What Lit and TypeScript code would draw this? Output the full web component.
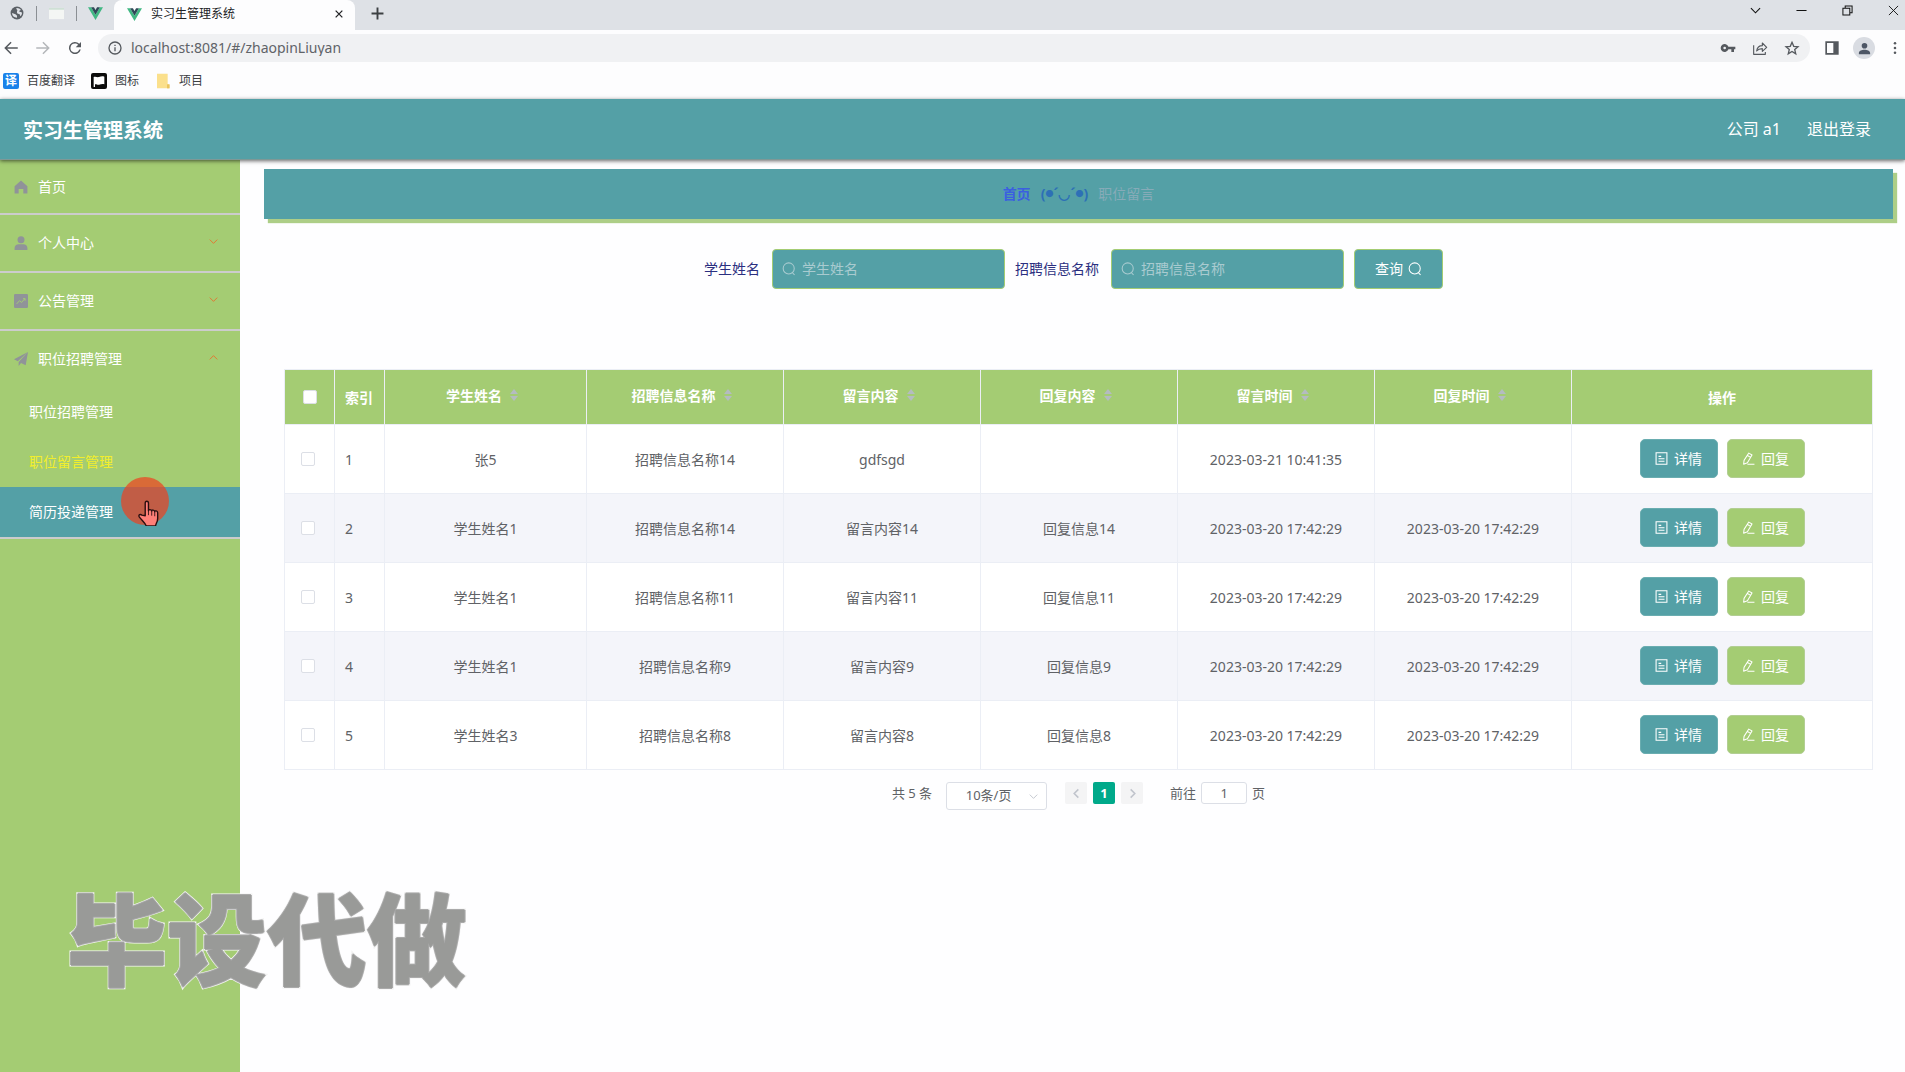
import { LitElement, html, css, svg, nothing } from "lit";
import { customElement, property } from "lit/decorators.js";
import { classMap } from "lit/directives/class-map.js";

const FONT = css`"Noto Sans", "Noto Sans CJK SC", sans-serif`;

const base = css`
  * { box-sizing: border-box; }
  svg { display: block; flex: none; }
  button, input, select { font: inherit; margin: 0; }
  button { cursor: pointer; padding: 0; border: 0; background: none; color: inherit; }
  a { color: inherit; text-decoration: none; }
`;

const shapes: Record<string, unknown> = {
  back: svg`<path fill="currentColor" d="M21 11H6.8l6-6L11.400 3.600 3 12l8.400 8.400 1.400-1.400-6-6H21z"/>`,
  forward: svg`<path fill="currentColor" d="M3 11h14.200l-6-6 1.400-1.400L21 12l-8.400 8.400-1.400-1.400 6-6H3z"/>`,
  reload: svg`<path fill="currentColor" d="M17.650 6.350A8 8 0 1 0 19.730 14h-2.080A6 6 0 1 1 12 6c1.660 0 3.140.69 4.220 1.780L13 11h7V4z"/>`,
  info: svg`<path fill="currentColor" d="M11 7h2v2h-2zm0 4h2v6h-2zm1-9a10 10 0 1 0 0 20 10 10 0 0 0 0-20zm0 18a8 8 0 1 1 0-16 8 8 0 0 1 0 16z"/>`,
  key: svg`<path fill="currentColor" d="M12.650 10A6 6 0 1 0 12.650 14H17v4h4v-4h2v-4zM7 14a2 2 0 1 1 0-4 2 2 0 0 1 0 4z"/>`,
  share: svg`<path fill="none" stroke="currentColor" stroke-width="1.700" stroke-linejoin="round" d="M2.500 8v13.500H20V18M7 16.500c.8-5.500 4-8 8.500-8V4.500L22 11l-6.500 6v-4c-4 0-6.500 1-8.500 3.500z"/>`,
  star: svg`<path fill="none" stroke="currentColor" stroke-width="2" d="M12 3.500l2.600 6 6.400.6-4.900 4.200 1.500 6.300-5.600-3.400-5.600 3.400 1.500-6.300L3 10.100l6.400-.6z"/>`,
  panel: svg`<path fill="currentColor" fill-rule="evenodd" d="M2 2h20v20H2zM4.500 4.500v15H14v-15z"/>`,
  person: svg`<path fill="currentColor" d="M12 12a4.500 4.500 0 1 0 0-9 4.500 4.500 0 0 0 0 9zm0 2c-4 0-9 1.600-9 5v2h18v-2c0-3.400-5-5-9-5z"/>`,
  dots: svg`<g fill="currentColor"><circle cx="12" cy="4" r="2.200"/><circle cx="12" cy="12" r="2.200"/><circle cx="12" cy="20" r="2.200"/></g>`,
  globe: svg`<circle cx="12" cy="12" r="11" fill="#5b6066"/><path fill="#dfe2e7" d="M3.500 12c2 .3 3 1.200 4.500 1.500 2 .4 2.200 1.500 3.500 2.500 1 .8.500 2.500.500 4C7 20 3.500 17 3.500 12zM11 3.500c3-.3 6 .8 8 3.500-2.500.2-3 1.500-3 3 1.500.5 3 .3 4.500 1 .2 3-1 5-2.500 6.500-1-1-.5-2.500-1.500-3.500-1.500-1-4-.5-4.500-2.500-.5-2.500 1-3 .5-4.500-.5-1-2-1.500-1.500-3.500z"/>`,
  vue: svg`<path fill="#41b883" d="M0 2h5l7 12 7-12h5L12 22.500z"/><path fill="#2f4858" d="M5 2h4.500L12 6.500 14.500 2H19l-7 12z"/>`,
  page: svg`<path fill="#f4f6f4" d="M0 3h24v18H0z"/><path fill="#cfe0d6" d="M0 3h24v3H0z"/>`,
  cross: svg`<path stroke="currentColor" stroke-width="3" d="M4 4l16 16M20 4L4 20"/>`,
  thinCross: svg`<path stroke="currentColor" stroke-width="2" d="M2 2l20 20M22 2L2 22"/>`,
  plus: svg`<path stroke="currentColor" stroke-width="3.500" d="M12 1v22M1 12h22"/>`,
  down: svg`<path fill="none" stroke="currentColor" stroke-width="2.400" d="M2 7l10 10L22 7"/>`,
  up: svg`<path fill="none" stroke="currentColor" stroke-width="2.400" d="M2 17L12 7l10 10"/>`,
  left: svg`<path fill="none" stroke="currentColor" stroke-width="3.400" d="M16 3l-9 9 9 9"/>`,
  right: svg`<path fill="none" stroke="currentColor" stroke-width="3.400" d="M8 3l9 9-9 9"/>`,
  minimize: svg`<path stroke="currentColor" stroke-width="2.200" d="M1 12h22"/>`,
  restore: svg`<path fill="none" stroke="currentColor" stroke-width="2.200" d="M2 7h15v15H2zM7 7V2h15v15h-5"/>`,
  search: svg`<circle cx="11.500" cy="11" r="9.500" fill="none" stroke="currentColor" stroke-width="1.800"/><path stroke="currentColor" stroke-width="1.800" d="M17.500 18l4 4"/>`,
  home: svg`<path fill="currentColor" d="M12 1L1 10.500V23h7v-7.500h8V23h7V10.500z"/>`,
  user: svg`<circle cx="12" cy="6.500" r="6" fill="currentColor"/><path fill="currentColor" d="M1 24v-3.500C1 16.500 4 14 8 14h8c4 0 7 2.500 7 6.500V24z"/>`,
  chart: svg`<rect width="24" height="24" rx="2" fill="currentColor"/><path fill="none" stroke="#a4cc73" stroke-width="1.600" d="M4.500 17l5-5.500 3.500 3 5.500-6.500M15.500 8h3.500v3.500"/>`,
  plane: svg`<path fill="currentColor" d="M24 0L0 12.500l6.500 3.500zM24 0L8 17v7l4-5 8 3.500z"/>`,
  document: svg`<path fill="none" stroke="currentColor" stroke-width="2" d="M2 1.500h20v21H2zM6.500 8h5M6.500 12.500h11M6.500 17h11"/>`,
  edit: svg`<path fill="none" stroke="currentColor" stroke-width="1.900" stroke-linejoin="round" d="M12.500 2l6 3.500-8.500 14.500-7 2.500.8-7zM10 6.500l6 3.500M10 22.500h13"/>`,
  flag: svg`<rect width="24" height="24" rx="3" fill="#0c0c0c"/><path fill="#fff" d="M4 6c3-1.500 5 1 8 0s5-2 8-.5V17c-3-1-5 0-8 .5S8 16 6 17v4H4z"/>`,
  folder: svg`<path fill="#fbe08c" d="M3 1h16v16h2v6H3z"/><path fill="#eac45c" d="M18 17h4v6h-4z"/>`,
  hand: svg`<path fill="#ff7f78" stroke="#2a0f10" stroke-width="1.300" stroke-linejoin="round" d="M8.500 14.500V3c0-2.400 3-2.400 3 0v7c0-1.500 2.800-1.500 3 .3 0-1.500 2.600-1.300 2.800.5.200-1.300 2.700-1 2.700 1V17c0 3-1.500 4.500-2 7H9.500C8.500 21 5 18.500 3 15.500c-1-1.800 1-2.800 2.500-1.500z"/><path stroke="#2a0f10" stroke-width=".8" d="M11.500 10v4M14.500 10.500v4M17.300 11v4"/>`,
};

const icon = (name: string, size: number) => html`
  <svg viewBox="0 0 24 24" width=${size} height=${size} aria-hidden="true">${shapes[name]}</svg>`;

@customElement("browser-bar")
export class BrowserBar extends LitElement {
  static styles = [base, css`
    :host { display: block; font: 12px/16px ${FONT}; color: #3c4043; background: #fdfdfe; }
    .tabs { display: flex; height: 30px; padding-bottom: 4px; align-items: center; background: #dee1e6; }
    .mini { display: flex; justify-content: center; width: 40px; }
    .mini + .mini { border-left: 1px solid #8b8f94; }
    .mini:first-child { width: 36px; padding-right: 2px; }
    .mini.edge { width: 38px; }
    .tab { display: flex; align-items: center; align-self: flex-start; width: 241px; height: 30px; padding: 0 11px 2px 13px; gap: 9px; border-radius: 8px 8px 0 0; background: #fdfdfe; color: #202124; }
    .name { flex: 1; }
    .add { margin-left: 16px; }
    .window { display: flex; gap: 35px; margin-left: auto; padding-right: 6px; padding-bottom: 6px; color: #111; }
    .tools { display: flex; align-items: center; height: 36px; color: #55595e; }
    .nav { display: flex; gap: 14px; padding: 0 14px 0 2px; }
    .nav .off { color: #b4b7ba; }
    .address { display: flex; align-items: center; flex: 1; height: 28px; padding: 0 10px 0 9px; gap: 8px; border-radius: 14px; background: #f0f1f3; }
    .url { flex: 1; min-width: 0; border: 0; outline: 0; padding: 0; background: none; font-size: 14px; color: #5f6368; }
    .marks { display: flex; gap: 16px; }
    .side { display: flex; align-items: center; gap: 13px; padding: 0 3px 0 14px; }
    .avatar { display: grid; place-items: center; width: 22px; height: 22px; border-radius: 50%; background: #d9dce2; color: #4d5665; }
    .bookmarks { display: flex; align-items: center; gap: 16px; height: 32px; padding: 0 3px 3px; }
    .bookmark { display: flex; align-items: center; gap: 8px; }
    .fanyi { display: grid; place-items: center; width: 16px; height: 16px; border-radius: 2px; background: #1a82ea; color: #fff; font-weight: 700; }
  `];

  render() {
    return html`
      <div class="tabs">
        <div class="mini">${icon("globe", 14)}</div>
        <div class="mini">${icon("page", 15)}</div>
        <div class="mini edge">${icon("vue", 15)}</div>
        <div class="tab">
          ${icon("vue", 15)}<span class="name">实习生管理系统</span>
          <button aria-label="关闭标签页">${icon("cross", 10)}</button>
        </div>
        <button class="add" aria-label="新建标签页">${icon("plus", 13)}</button>
        <div class="window">
          <button aria-label="搜索标签页">${icon("down", 11)}</button>
          <button aria-label="最小化">${icon("minimize", 11)}</button>
          <button aria-label="还原">${icon("restore", 11)}</button>
          <button aria-label="关闭">${icon("thinCross", 11)}</button>
        </div>
      </div>
      <div class="tools">
        <div class="nav">
          <button aria-label="后退">${icon("back", 18)}</button>
          <button class="off" aria-label="前进" disabled>${icon("forward", 18)}</button>
          <button aria-label="重新加载">${icon("reload", 18)}</button>
        </div>
        <div class="address">
          ${icon("info", 16)}
          <input class="url" aria-label="地址栏" value="localhost:8081/#/zhaopinLiuyan" />
          <div class="marks">
            <button aria-label="密码">${icon("key", 16)}</button>
            <button aria-label="分享">${icon("share", 16)}</button>
            <button aria-label="收藏">${icon("star", 16)}</button>
          </div>
        </div>
        <div class="side">
          <button aria-label="侧边栏">${icon("panel", 16)}</button>
          <button class="avatar" aria-label="用户">${icon("person", 15)}</button>
          <button aria-label="菜单">${icon("dots", 14)}</button>
        </div>
      </div>
      <div class="bookmarks">
        <a class="bookmark" href="#fanyi"><span class="fanyi">译</span>百度翻译</a>
        <a class="bookmark" href="#icons">${icon("flag", 16)}图标</a>
        <a class="bookmark" href="#projects">${icon("folder", 16)}项目</a>
      </div>`;
  }
}

interface Section { label: string; icon: string; arrow?: "up" | "down"; children?: string[]; }

@customElement("side-menu")
export class SideMenu extends LitElement {
  static styles = [base, css`
    :host { display: block; width: 240px; flex: none; background: #a4cc73; color: #fff; font: 14px/20px ${FONT}; }
    .section { border-bottom: 2px solid #ccc; }
    .title { display: flex; align-items: center; gap: 10px; width: 100%; height: 56px; padding: 0 22px 0 14px; text-align: left; color: #fff; }
    .section:first-child .title { height: 53px; }
    .glyph { color: #909399; }
    .label { flex: 1; }
    .arrow { color: #e8702e; padding-bottom: 4px; }
    .item { display: flex; align-items: center; height: 50px; padding-left: 29px; }
    .item.current { color: #f2ee2c; }
    .item.hover { background: #54a0a6; }
  `];

  sections: Section[] = [
    { label: "首页", icon: "home" },
    { label: "个人中心", icon: "user", arrow: "down" },
    { label: "公告管理", icon: "chart", arrow: "down" },
    { label: "职位招聘管理", icon: "plane", arrow: "up", children: ["职位招聘管理", "职位留言管理", "简历投递管理"] },
  ];

  render() {
    return html`<nav>${this.sections.map((s) => html`
      <div class="section">
        <button class="title">
          <span class="glyph">${icon(s.icon, 14)}</span>
          <span class="label">${s.label}</span>
          ${s.arrow ? html`<span class="arrow">${icon(s.arrow, 9)}</span>` : nothing}
        </button>
        ${s.children?.map((c, i) => html`
          <a href="#/" class=${classMap({ item: true, current: i === 1, hover: i === 2 })}>${c}</a>`)}
      </div>`)}</nav>`;
  }
}

@customElement("message-table")
export class MessageTable extends LitElement {
  static styles = [base, css`
    :host { display: block; font: 14px/23px ${FONT}; color: #606266; }
    table { width: 100%; table-layout: fixed; border-collapse: collapse; }
    th, td { border: 1px solid #ebeef5; padding: 0 10px; text-align: center; }
    th { height: 55px; background: #a4cc73; color: #fff; font-weight: 700; }
    td { height: 69px; background: #fff; }
    tr:nth-child(even) td { background: #f4f5fa; }
    .index { text-align: left; padding: 0 0 0 10px; }
    .narrow { width: 50px; }
    .student { width: 202px; }
    .data { width: 197px; }
    .ops { width: 301px; }
    .sort { display: flex; align-items: center; justify-content: center; gap: 8px; padding-bottom: 4px; }
    .carets { display: grid; gap: 2px; margin-right: 7px; }
    .carets i { border: 4px solid transparent; border-top: 0; border-bottom-width: 5px; border-bottom-color: #b4bcc0; }
    .carets i + i { border-top: 5px solid #b4bcc0; border-bottom: 0; }
    .check { display: block; margin: 0 auto; appearance: none; width: 14px; height: 14px; border: 1px solid #dcdfe6; border-radius: 2px; background: #fff; }
    td .check { margin-left: 6px; }
    .actions { display: flex; justify-content: center; gap: 9px; padding-bottom: 1px; }
    .action { display: flex; align-items: center; justify-content: center; gap: 6px; width: 78px; height: 39px; border-radius: 5px; color: #fff; background: #54a0a6; border: 1px solid #6aadb0; }
    .reply { background: #a4cc73; border-color: #b2ce93; }
  `];

  headings = ["学生姓名", "招聘信息名称", "留言内容", "回复内容", "留言时间", "回复时间"];
  rows = [
    ["张5", "招聘信息名称14", "gdfsgd", "", "2023-03-21 10:41:35", ""],
    ["学生姓名1", "招聘信息名称14", "留言内容14", "回复信息14", "2023-03-20 17:42:29", "2023-03-20 17:42:29"],
    ["学生姓名1", "招聘信息名称11", "留言内容11", "回复信息11", "2023-03-20 17:42:29", "2023-03-20 17:42:29"],
    ["学生姓名1", "招聘信息名称9", "留言内容9", "回复信息9", "2023-03-20 17:42:29", "2023-03-20 17:42:29"],
    ["学生姓名3", "招聘信息名称8", "留言内容8", "回复信息8", "2023-03-20 17:42:29", "2023-03-20 17:42:29"],
  ];

  render() {
    return html`<table>
      <thead><tr>
        <th class="narrow"><input class="check" type="checkbox" aria-label="全选" /></th>
        <th class="narrow index">索引</th>
        ${this.headings.map((h, i) => html`
          <th class=${i === 0 ? "student" : "data"}><div class="sort">${h}<span class="carets"><i></i><i></i></span></div></th>`)}
        <th class="ops">操作</th>
      </tr></thead>
      <tbody>${this.rows.map((r, i) => html`<tr>
        <td><input class="check" type="checkbox" aria-label="选择第${i + 1}行" /></td>
        <td class="index">${i + 1}</td>
        ${r.map((c) => html`<td>${c}</td>`)}
        <td><div class="actions">
          <button class="action">${icon("document", 13)}详情</button>
          <button class="action reply">${icon("edit", 13)}回复</button>
        </div></td>
      </tr>`)}</tbody>
    </table>`;
  }
}

@customElement("search-field")
export class SearchField extends LitElement {
  @property() label = "";
  static styles = [base, css`
    :host { display: flex; align-items: center; gap: 12px; font: 14px/20px ${FONT}; color: #2b2f80; }
    .box { display: flex; align-items: center; gap: 6px; width: 233px; height: 40px; padding: 0 10px 0 9px; border: 1px solid #a4cc73; border-radius: 4px; background: #54a0a6; color: #a9cbd0; }
    .text { flex: 1; min-width: 0; border: 0; outline: 0; padding: 0; background: none; color: #fff; }
    .text::placeholder { color: #a9cbd0; opacity: 1; }
  `];
  render() {
    return html`<label for="text">${this.label}</label>
      <div class="box">${icon("search", 14)}<input id="text" class="text" placeholder=${this.label} /></div>`;
  }
}

@customElement("page-bar")
export class PageBar extends LitElement {
  static styles = [base, css`
    :host { display: flex; justify-content: center; align-items: flex-start; padding-top: 12px; font: 13px/22px ${FONT}; color: #606266; }
    .size { position: relative; display: flex; margin: 0 18px 0 14px; }
    select { appearance: none; width: 101px; height: 28px; padding: 0 16px 2px 0; border: 1px solid #dcdfe6; border-radius: 3px; background: #fff; color: #606266; text-align: center; text-align-last: center; }
    .caret { position: absolute; right: 9px; top: 10px; color: #c0c4cc; }
    .pages { display: flex; gap: 6px; margin-right: 27px; }
    .page { display: grid; place-items: center; width: 22px; height: 22px; border-radius: 2px; background: #f4f4f5; color: #c0c4cc; font-weight: 700; }
    .page.current { background: #00a98a; color: #fff; }
    .jump { display: flex; gap: 5px; }
    .number { width: 46px; height: 22px; border: 1px solid #dcdfe6; border-radius: 3px; background: #fff; text-align: center; color: #606266; }
  `];
  render() {
    return html`
      <span>共 5 条</span>
      <div class="size">
        <select aria-label="每页条数"><option>10条/页</option></select>
        <span class="caret">${icon("down", 9)}</span>
      </div>
      <div class="pages">
        <button class="page" aria-label="上一页">${icon("left", 11)}</button>
        <button class="page current">1</button>
        <button class="page" aria-label="下一页">${icon("right", 11)}</button>
      </div>
      <label class="jump">前往<input class="number" value="1" />页</label>`;
  }
}

@customElement("app-root")
export class AppRoot extends LitElement {
  static styles = [base, css`
    :host { position: relative; display: flex; flex-direction: column; min-height: 100vh; overflow: hidden; background: #fefeff; font: 14px/20px ${FONT}; }
    header { display: flex; align-items: center; gap: 26px; height: 61px; margin-top: 1px; padding: 0 34px 0 23px; background: #54a0a6; color: #fff; font-size: 16px; box-shadow: 0 1px 4px rgba(0, 0, 0, 0.6); border-bottom: 1px solid #7f9896; z-index: 1; }
    h1 { flex: 1; margin: 0; padding-top: 3px; font-size: 20px; line-height: 28px; font-weight: 700; }
    .body { display: flex; flex: 1; }
    main { flex: 1; min-width: 0; padding: 9px 12px 0 24px; }
    .crumbs { display: flex; align-items: center; justify-content: center; gap: 10px; height: 50px; background: #54a0a6; box-shadow: 4px 4px 1px #adce87; }
    .crumbs a { color: #3b5fe0; font-weight: 700; }
    .face { display: flex; align-items: center; color: #2d70b6; font-weight: 700; }
    .eye { font-size: 8px; }
    .here { color: #86abb8; }
    form { display: flex; justify-content: center; gap: 10px; padding: 30px 10px 80px 0; }
    .query { display: flex; align-items: center; justify-content: center; gap: 5px; width: 89px; height: 40px; border: 1px solid #a4cc73; border-radius: 4px; background: #54a0a6; color: #fff; }
    .list { padding: 0 20px; }
    .watermark { position: absolute; left: 67px; top: 862px; font: 900 100px/145px "Noto Sans CJK SC", sans-serif; color: #999a98; -webkit-text-stroke: 3px #f2f2f2; paint-order: stroke fill; text-shadow: 1px 0 #aaa, -1px 0 #aaa, 0 1px #aaa, 0 -1px #aaa; white-space: nowrap; pointer-events: none; }
    .spot { position: absolute; left: 121px; top: 477px; width: 48px; height: 48px; border-radius: 50%; background: rgba(240, 64, 30, 0.7); }
    .pointer { position: absolute; left: 136px; top: 500px; }
  `];

  render() {
    return html`
      <browser-bar></browser-bar>
      <header>
        <h1>实习生管理系统</h1>
        <span>公司 a1</span>
        <a href="#/login">退出登录</a>
      </header>
      <div class="body">
        <side-menu></side-menu>
        <main>
          <div class="crumbs">
            <a href="#/">首页</a><span class="face">(<span class="eye">●</span>´◡´<span class="eye">●</span>)</span><span class="here">职位留言</span>
          </div>
          <form @submit=${(e: Event) => e.preventDefault()}>
            <search-field label="学生姓名"></search-field>
            <search-field label="招聘信息名称"></search-field>
            <button class="query">查询${icon("search", 14)}</button>
          </form>
          <div class="list">
            <message-table></message-table>
            <page-bar></page-bar>
          </div>
        </main>
      </div>
      <div class="spot"></div>
      <div class="pointer">${icon("hand", 26)}</div>
      <div class="watermark">毕设代做</div>`;
  }
}
